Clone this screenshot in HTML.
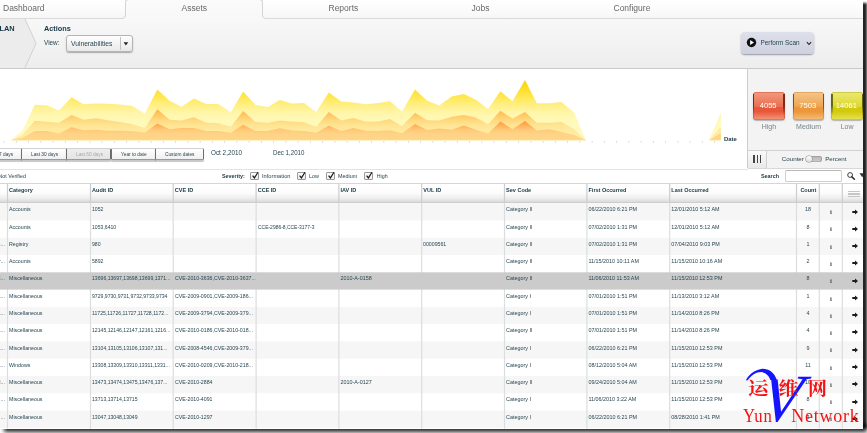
<!DOCTYPE html>
<html><head><meta charset="utf-8"><title>Assets - Vulnerabilities</title>
<style>
html,body{margin:0;padding:0;background:#fff;}
body{width:867px;height:433px;overflow:hidden;position:relative;font-family:"Liberation Sans","Noto Sans CJK SC",sans-serif;}
#card{will-change:transform;position:absolute;left:0;top:0;width:863px;height:428.5px;background:#fff;overflow:hidden;}
.t{position:absolute;white-space:nowrap;line-height:1.2;transform-origin:0 50%;}
.abs{position:absolute;}
.btn{position:absolute;box-sizing:border-box;border:1px solid #b4b4b4;border-radius:2px;background:linear-gradient(#fefefe,#e9e9e9);box-shadow:0 1px 0 rgba(0,0,0,.18);}
.cb{position:absolute;box-sizing:border-box;width:8.5px;height:8.5px;border:1px solid #9a9a9a;background:linear-gradient(#fff,#ececec);border-radius:1px;}
</style></head><body>
<div class="abs" style="left:858px;top:2.6px;width:8.6px;height:425px;background:rgba(0,0,0,.86);filter:blur(1px);"></div>
<div class="abs" style="left:3.5px;top:424px;width:863.2px;height:7.6px;background:rgba(0,0,0,.86);filter:blur(1.9px);"></div>
<div id="card">

<div class="abs" style="left:0;top:0;width:863px;height:18px;background:linear-gradient(#ffffff,#f7f7f7);border-bottom:1px solid #d9d9d9;"></div>
<div class="abs" style="left:0;top:19px;width:863px;height:48.7px;background:linear-gradient(#f8f8f8,#ededed);border-bottom:1px solid #c9c9c9;"></div>
<div class="abs" style="left:125px;top:-1.2px;width:138px;height:15.4px;box-sizing:border-box;background:linear-gradient(#fbfbfb,#f8f8f8);border:1px solid #d4d4d4;border-bottom:none;border-radius:3.5px 3.5px 0 0;"></div>
<svg class="abs" style="left:120px;top:13px" width="148" height="7" viewBox="120 13 148 7">
<path d="M125.5,14 C125.5,17 124.5,18.5 121.5,18.5 L121.5,19.6 L266.5,19.6 L266.5,18.5 C263.5,18.5 262.5,17 262.5,14 Z" fill="#f8f8f8"/>
<path d="M125.5,14 C125.5,17 124.5,18.5 121.5,18.5" fill="none" stroke="#d4d4d4" stroke-width="1"/>
<path d="M262.5,14 C262.5,17 263.5,18.5 266.5,18.5" fill="none" stroke="#d4d4d4" stroke-width="1"/>
</svg>
<span class="t" style="left:3px;top:3.35px;font-size:8.5px;color:#686868;">Dashboard</span>
<span class="t" style="left:181.5px;top:3.35px;font-size:8.5px;color:#686868;">Assets</span>
<span class="t" style="left:328.5px;top:3.35px;font-size:8.5px;color:#686868;">Reports</span>
<span class="t" style="left:471.5px;top:3.35px;font-size:8.5px;color:#686868;">Jobs</span>
<span class="t" style="left:613.5px;top:3.35px;font-size:8.5px;color:#686868;">Configure</span>
<svg class="abs" style="left:0;top:19px" width="40" height="49" viewBox="0 0 40 49">
<polygon points="0,0 25,0 36,24.3 25,48.7 0,48.7" fill="#ececec"/>
<polyline points="25,0 36,24.3 25,48.7" fill="none" stroke="#c9c9c9" stroke-width="0.8"/>
</svg>
<span class="t" style="left:-0.5px;top:24.66px;font-size:7.4px;color:#183643;font-weight:bold;">LAN</span>
<span class="t" style="left:44px;top:24.72px;font-size:7.3px;color:#183643;font-weight:bold;">Actions</span>
<span class="t" style="left:44px;top:39.36px;font-size:6.4px;color:#284652;">View:</span>
<div class="btn" style="left:65.7px;top:34.7px;width:67.3px;height:17.6px;border-radius:3px;box-shadow:0 1px 1.2px rgba(0,0,0,.3);"></div>
<div class="abs" style="left:120px;top:37px;width:1px;height:13px;background:#c4c4c4;"></div>
<span class="t" style="left:71px;top:39.58px;font-size:6.7px;color:#284652;">Vulnerabilities</span>
<svg class="abs" style="left:123.3px;top:41.7px" width="6" height="4" viewBox="0 0 6 4"><polygon points="0.6,0.3 5.2,0.3 2.9,3.4" fill="#222"/></svg>
<div class="abs" style="left:740.5px;top:31.5px;width:73.5px;height:22.5px;border-radius:4px;background:linear-gradient(#dddfeb,#cfd1df);box-shadow:0 1px 1.5px rgba(60,60,90,.5);"></div>
<svg class="abs" style="left:745.5px;top:37px" width="11" height="11" viewBox="0 0 11 11"><circle cx="5.5" cy="5.5" r="4.7" fill="#111"/><polygon points="4.1,3.1 8,5.5 4.1,7.9" fill="#fff"/></svg>
<span class="t" style="left:760.5px;top:38.56px;font-size:6.4px;color:#284652;">Perform Scan</span>
<svg class="abs" style="left:805.5px;top:40.5px" width="6" height="5" viewBox="0 0 6 5"><polyline points="0.9,1.2 3,3.5 5.1,1.2" fill="none" stroke="#222" stroke-width="1.1"/></svg>
<svg class="abs" style="left:0;top:68px" width="748" height="82" viewBox="0 68 748 82">
<defs>
<linearGradient id="g1" gradientUnits="userSpaceOnUse" x1="0" y1="78" x2="0" y2="140"><stop offset="0" stop-color="#f4d000"/><stop offset="0.2" stop-color="#ffe02e"/><stop offset="0.36" stop-color="#ffeb66"/><stop offset="0.45" stop-color="#fff08a"/><stop offset="0.55" stop-color="#fff5a6"/><stop offset="0.68" stop-color="#fff9b8"/><stop offset="1" stop-color="#fffac2"/></linearGradient>
<linearGradient id="g2" gradientUnits="userSpaceOnUse" x1="0" y1="108" x2="0" y2="140"><stop offset="0" stop-color="#ffae3e"/><stop offset="0.16" stop-color="#ffc25a"/><stop offset="0.36" stop-color="#ffd77a"/><stop offset="0.55" stop-color="#ffe595"/><stop offset="0.72" stop-color="#ffeb9e"/><stop offset="1" stop-color="#ffeeaa"/></linearGradient>
<linearGradient id="g3" gradientUnits="userSpaceOnUse" x1="0" y1="120" x2="0" y2="140"><stop offset="0" stop-color="#ff9236"/><stop offset="0.25" stop-color="#ffae56"/><stop offset="0.5" stop-color="#ffca7a"/><stop offset="0.7" stop-color="#ffd386"/><stop offset="1" stop-color="#ffd78a"/></linearGradient>
</defs>
<polygon points="11.3,140 22.6,130.3 34.8,104.8 46.8,105.2 59,110.5 71.6,97.2 83.5,104.2 96,103.6 108,103.7 120,104.5 132.5,106 144.8,113.8 157.3,89.6 169.6,100.7 181.4,106.7 193.9,98.6 206.2,104 218.3,104 230.8,112.3 243.1,91.4 255.6,105 267.7,106.9 279.8,100 292,103.4 304,102.9 316.2,112 328.8,92.5 341.3,101.5 353.4,102.4 366,104.2 378.2,102.9 390,101.2 402,111.5 415,89.6 427.2,100.8 439.2,105.5 451.7,96.5 463.9,93.9 475.8,99.8 488.1,109 500.4,91.3 512.5,101.2 525,79.9 536.8,103.2 549.2,103.2 561.4,102 574,112.4 585.8,140 585.8,140.3 11.3,140.3" fill="url(#g1)"/>
<polygon points="11.3,140 22.6,134.8 34.8,120.8 46.8,121.7 59,122.8 71.6,115 83.5,119.8 96,118.3 108,120.2 120,122 132.5,124.3 144.8,128 157.3,109.3 169.6,119.8 181.4,120.5 193.9,117.2 206.2,122.8 218.3,123.2 230.8,126.8 243.1,110.9 255.6,122 267.7,122.8 279.8,120.5 292,121.6 304,122.3 316.2,126.8 328.8,112 341.3,120.5 353.4,118.1 366,121.8 378.2,121.6 390,119 402,126 415,112.8 427.2,120.2 439.2,120.5 451.7,116.7 463.9,115 475.8,117.6 488.1,124.3 500.4,110.7 512.5,118.5 525,112 536.8,122.8 549.2,122.8 561.4,122 574,128.9 585.8,140 585.8,140.3 11.3,140.3" fill="url(#g2)"/>
<polygon points="11.3,140 22.6,137.8 34.8,131 46.8,131 59,133.6 71.6,127.3 83.5,130.3 96,129.8 108,130.7 120,130.7 132.5,131.3 144.8,132.8 157.3,123.5 169.6,129.2 181.4,128 193.9,128 206.2,131 218.3,131 230.8,132.8 243.1,124.8 255.6,131 267.7,131 279.8,128.3 292,130.6 304,131 316.2,132.7 328.8,125.7 341.3,131 353.4,128 366,130.8 378.2,131 390,130.2 402,133.2 415,124 427.2,130 439.2,128.5 451.7,129.7 463.9,125.4 475.8,129.7 488.1,133.5 500.4,121.4 512.5,129.2 525,121 536.8,130.6 549.2,129.2 561.4,132 574,135 585.8,140 585.8,140.3 11.3,140.3" fill="url(#g3)"/>
<polygon points="709,140.3 720.8,112.8 720.8,140.3" fill="url(#g1)"/>
<polygon points="709,140.3 720.8,127 720.8,140.3" fill="url(#g2)"/>
<polygon points="709,140.3 720.8,133 720.8,140.3" fill="url(#g3)"/>
<rect x="3.65" y="141" width="0.9" height="1.8" fill="#ccd6ea"/>
<rect x="15.90" y="141" width="0.9" height="1.8" fill="#ccd6ea"/>
<rect x="28.15" y="141" width="0.9" height="1.8" fill="#ccd6ea"/>
<rect x="40.40" y="141" width="0.9" height="1.8" fill="#ccd6ea"/>
<rect x="52.65" y="141" width="0.9" height="1.8" fill="#ccd6ea"/>
<rect x="64.90" y="141" width="0.9" height="1.8" fill="#ccd6ea"/>
<rect x="77.15" y="141" width="0.9" height="1.8" fill="#ccd6ea"/>
<rect x="89.40" y="141" width="0.9" height="1.8" fill="#ccd6ea"/>
<rect x="101.65" y="141" width="0.9" height="1.8" fill="#ccd6ea"/>
<rect x="113.90" y="141" width="0.9" height="1.8" fill="#ccd6ea"/>
<rect x="126.15" y="141" width="0.9" height="1.8" fill="#ccd6ea"/>
<rect x="138.40" y="141" width="0.9" height="1.8" fill="#ccd6ea"/>
<rect x="150.65" y="141" width="0.9" height="1.8" fill="#ccd6ea"/>
<rect x="162.90" y="141" width="0.9" height="1.8" fill="#ccd6ea"/>
<rect x="175.15" y="141" width="0.9" height="1.8" fill="#ccd6ea"/>
<rect x="187.40" y="141" width="0.9" height="1.8" fill="#ccd6ea"/>
<rect x="199.65" y="141" width="0.9" height="1.8" fill="#ccd6ea"/>
<rect x="211.90" y="141" width="0.9" height="1.8" fill="#ccd6ea"/>
<rect x="224.15" y="141" width="0.9" height="1.8" fill="#ccd6ea"/>
<rect x="236.40" y="141" width="0.9" height="1.8" fill="#ccd6ea"/>
<rect x="248.65" y="141" width="0.9" height="1.8" fill="#ccd6ea"/>
<rect x="260.90" y="141" width="0.9" height="1.8" fill="#ccd6ea"/>
<rect x="273.15" y="141" width="0.9" height="1.8" fill="#ccd6ea"/>
<rect x="285.40" y="141" width="0.9" height="1.8" fill="#ccd6ea"/>
<rect x="297.65" y="141" width="0.9" height="1.8" fill="#ccd6ea"/>
<rect x="309.90" y="141" width="0.9" height="1.8" fill="#ccd6ea"/>
<rect x="322.15" y="141" width="0.9" height="1.8" fill="#ccd6ea"/>
<rect x="334.40" y="141" width="0.9" height="1.8" fill="#ccd6ea"/>
<rect x="346.65" y="141" width="0.9" height="1.8" fill="#ccd6ea"/>
<rect x="358.90" y="141" width="0.9" height="1.8" fill="#ccd6ea"/>
<rect x="371.15" y="141" width="0.9" height="1.8" fill="#ccd6ea"/>
<rect x="383.40" y="141" width="0.9" height="1.8" fill="#ccd6ea"/>
<rect x="395.65" y="141" width="0.9" height="1.8" fill="#ccd6ea"/>
<rect x="407.90" y="141" width="0.9" height="1.8" fill="#ccd6ea"/>
<rect x="420.15" y="141" width="0.9" height="1.8" fill="#ccd6ea"/>
<rect x="432.40" y="141" width="0.9" height="1.8" fill="#ccd6ea"/>
<rect x="444.65" y="141" width="0.9" height="1.8" fill="#ccd6ea"/>
<rect x="456.90" y="141" width="0.9" height="1.8" fill="#ccd6ea"/>
<rect x="469.15" y="141" width="0.9" height="1.8" fill="#ccd6ea"/>
<rect x="481.40" y="141" width="0.9" height="1.8" fill="#ccd6ea"/>
<rect x="493.65" y="141" width="0.9" height="1.8" fill="#ccd6ea"/>
<rect x="505.90" y="141" width="0.9" height="1.8" fill="#ccd6ea"/>
<rect x="518.15" y="141" width="0.9" height="1.8" fill="#ccd6ea"/>
<rect x="530.40" y="141" width="0.9" height="1.8" fill="#ccd6ea"/>
<rect x="542.65" y="141" width="0.9" height="1.8" fill="#ccd6ea"/>
<rect x="554.90" y="141" width="0.9" height="1.8" fill="#ccd6ea"/>
<rect x="567.15" y="141" width="0.9" height="1.8" fill="#ccd6ea"/>
<rect x="579.40" y="141" width="0.9" height="1.8" fill="#ccd6ea"/>
<rect x="591.65" y="141" width="0.9" height="1.8" fill="#ccd6ea"/>
<rect x="603.90" y="141" width="0.9" height="1.8" fill="#ccd6ea"/>
<rect x="616.15" y="141" width="0.9" height="1.8" fill="#ccd6ea"/>
<rect x="628.40" y="141" width="0.9" height="1.8" fill="#ccd6ea"/>
<rect x="640.65" y="141" width="0.9" height="1.8" fill="#ccd6ea"/>
<rect x="652.90" y="141" width="0.9" height="1.8" fill="#ccd6ea"/>
<rect x="665.15" y="141" width="0.9" height="1.8" fill="#ccd6ea"/>
<rect x="677.40" y="141" width="0.9" height="1.8" fill="#ccd6ea"/>
<rect x="689.65" y="141" width="0.9" height="1.8" fill="#ccd6ea"/>
<rect x="701.90" y="141" width="0.9" height="1.8" fill="#ccd6ea"/>
<rect x="714.15" y="141" width="0.9" height="1.8" fill="#ccd6ea"/>
</svg>
<span class="t" style="left:724px;top:135.66px;font-size:5.9px;color:#183643;font-weight:bold;">Date</span>
<div class="abs" style="left:-12.5px;top:147.7px;width:34.3px;height:12px;box-sizing:border-box;background:linear-gradient(#ffffff,#f0f0f0);border-top:1px solid #d2d2d2;border-bottom:1px solid #9a9a9a;border-left:1px solid #6f6f6f;border-right:1px solid #6f6f6f;border-radius:1.5px;box-shadow:0 1.2px 1px rgba(0,0,0,.22);"></div>
<div class="abs" style="left:20.8px;top:147.7px;width:45.900000000000006px;height:12px;box-sizing:border-box;background:linear-gradient(#ffffff,#f0f0f0);border-top:1px solid #d2d2d2;border-bottom:1px solid #9a9a9a;border-left:1px solid #6f6f6f;border-right:1px solid #6f6f6f;border-radius:1.5px;box-shadow:0 1.2px 1px rgba(0,0,0,.22);"></div>
<div class="abs" style="left:65.7px;top:147.7px;width:45.8px;height:12px;box-sizing:border-box;background:linear-gradient(#eeeeee,#e4e4e4);border-top:1px solid #d2d2d2;border-bottom:1px solid #9a9a9a;border-left:1px solid #6f6f6f;border-right:1px solid #6f6f6f;border-radius:1.5px;box-shadow:0 1.2px 1px rgba(0,0,0,.22);"></div>
<div class="abs" style="left:110.5px;top:147.7px;width:45.599999999999994px;height:12px;box-sizing:border-box;background:linear-gradient(#ffffff,#f0f0f0);border-top:1px solid #d2d2d2;border-bottom:1px solid #9a9a9a;border-left:1px solid #6f6f6f;border-right:1px solid #6f6f6f;border-radius:1.5px;box-shadow:0 1.2px 1px rgba(0,0,0,.22);"></div>
<div class="abs" style="left:155.1px;top:147.7px;width:48.70000000000002px;height:12px;box-sizing:border-box;background:linear-gradient(#ffffff,#f0f0f0);border-top:1px solid #d2d2d2;border-bottom:1px solid #9a9a9a;border-left:1px solid #6f6f6f;border-right:1px solid #6f6f6f;border-radius:1.5px;box-shadow:0 1.2px 1px rgba(0,0,0,.22);"></div>
<span class="t" style="left:-1.3px;top:150.62px;font-size:5.3px;color:#284652;transform:scaleX(0.9);">7 days</span>
<span class="t" style="left:31px;top:150.62px;font-size:5.3px;color:#284652;transform:scaleX(0.9);">Last 30 days</span>
<span class="t" style="left:76px;top:150.62px;font-size:5.3px;color:#a3a8ab;transform:scaleX(0.9);">Last 60 days</span>
<span class="t" style="left:121px;top:150.62px;font-size:5.3px;color:#284652;transform:scaleX(0.9);">Year to date</span>
<span class="t" style="left:165.3px;top:150.62px;font-size:5.3px;color:#284652;transform:scaleX(0.9);">Custom dates</span>
<span class="t" style="left:210.5px;top:148.74px;font-size:6.6px;color:#284652;transform:scaleX(0.96);">Oct 2,2010</span>
<span class="t" style="left:273.4px;top:148.74px;font-size:6.6px;color:#284652;transform:scaleX(0.93);">Dec 1,2010</span>
<div class="abs" style="left:0;top:168.5px;width:748px;height:1px;background:#e1e4e4;"></div>
<div class="abs" style="left:746.7px;top:68.7px;width:117px;height:99.8px;background:#f3f3f3;border-left:1px solid #cdcdcd;box-sizing:border-box;"></div>
<div class="abs" style="left:748px;top:149.5px;width:115px;height:1px;background:#d2d2d2;"></div>
<div class="abs" style="left:748px;top:168px;width:115px;height:1px;background:#d8d8d8;"></div>
<div class="abs" style="left:753.2px;top:91.5px;width:31.5px;height:28px;border-radius:3.5px;background:linear-gradient(#f19a80 0%,#ec6e50 52%,#e9573a 53%,#e9573a 70%,#f39c7c 100%);box-shadow:inset 0 0 0 0.6px #d2553a,0 1px 1.2px rgba(0,0,0,.28);"></div>
<div class="abs" style="left:753.2px;top:94px;width:1.3px;height:21px;background:linear-gradient(#6e1d08,#6e1d08 55%,rgba(0,0,0,0));opacity:.85;"></div>
<div class="abs" style="left:783.4000000000001px;top:94px;width:1.3px;height:21px;background:linear-gradient(#6e1d08,#6e1d08 55%,rgba(0,0,0,0));opacity:.85;"></div>
<span class="t" style="left:752.4000000000001px;width:31.5px;text-align:center;top:100.94px;font-size:7.6px;color:#fff;">4055</span>
<span class="t" style="left:742.7px;width:52.5px;text-align:center;top:122.70px;font-size:7px;color:#76858a;">High</span>
<div class="abs" style="left:792.8px;top:91.5px;width:31.5px;height:28px;border-radius:3.5px;background:linear-gradient(#f5c68a 0%,#eea552 52%,#ec973a 53%,#ec973a 70%,#f6bf7e 100%);box-shadow:inset 0 0 0 0.6px #cf8a3c,0 1px 1.2px rgba(0,0,0,.28);"></div>
<div class="abs" style="left:792.8px;top:94px;width:1.3px;height:21px;background:linear-gradient(#7a4208,#7a4208 55%,rgba(0,0,0,0));opacity:.85;"></div>
<div class="abs" style="left:823.0px;top:94px;width:1.3px;height:21px;background:linear-gradient(#7a4208,#7a4208 55%,rgba(0,0,0,0));opacity:.85;"></div>
<span class="t" style="left:792.0px;width:31.5px;text-align:center;top:100.94px;font-size:7.6px;color:#fff;">7503</span>
<span class="t" style="left:782.3px;width:52.5px;text-align:center;top:122.70px;font-size:7px;color:#76858a;">Medium</span>
<div class="abs" style="left:831.4px;top:91.5px;width:31.5px;height:28px;border-radius:3.5px;background:linear-gradient(#ebe874 0%,#dcd830 52%,#d2ca0c 53%,#d2ca0c 70%,#e7e35a 100%);box-shadow:inset 0 0 0 0.6px #b4ae18,0 1px 1.2px rgba(0,0,0,.28);"></div>
<div class="abs" style="left:831.4px;top:94px;width:1.3px;height:21px;background:linear-gradient(#55560a,#55560a 55%,rgba(0,0,0,0));opacity:.85;"></div>
<div class="abs" style="left:861.6px;top:94px;width:1.3px;height:21px;background:linear-gradient(#55560a,#55560a 55%,rgba(0,0,0,0));opacity:.85;"></div>
<span class="t" style="left:830.6px;width:31.5px;text-align:center;top:100.94px;font-size:7.6px;color:#fff;">14061</span>
<span class="t" style="left:820.9px;width:52.5px;text-align:center;top:122.70px;font-size:7px;color:#76858a;">Low</span>
<div class="abs" style="left:748px;top:150.5px;width:18px;height:17.5px;background:linear-gradient(#f9f9f9,#e9e9e9);border-right:1px solid #cfcfcf;"></div>
<div class="abs" style="left:753.3px;top:155.2px;width:1.4px;height:8.3px;background:#444;"></div>
<div class="abs" style="left:756.5px;top:155.2px;width:1.4px;height:8.3px;background:#444;"></div>
<div class="abs" style="left:759.6px;top:155.2px;width:1.4px;height:8.3px;background:#444;"></div>
<span class="t" style="left:781.7px;top:155.25px;font-size:6.25px;color:#284652;">Counter</span>
<span class="t" style="left:825.2px;top:155.28px;font-size:6.2px;color:#284652;">Percent</span>
<div class="abs" style="left:806px;top:156px;width:15.5px;height:6px;border-radius:3px;background:linear-gradient(#b4b4b4,#d0d0d0);box-shadow:inset 0 0 0 0.6px #8f8f8f;"></div>
<div class="abs" style="left:806.4px;top:156.3px;width:5.6px;height:5.4px;border-radius:3px;background:linear-gradient(#fff,#dedede);box-shadow:0 0 0 0.6px #8a8a8a;"></div>
<span class="t" style="left:-1.5px;top:172.82px;font-size:5.3px;color:#284652;">Not Verified</span>
<span class="t" style="left:222px;top:172.56px;font-size:5.4px;color:#183643;font-weight:bold;">Severity:</span>
<div class="cb" style="left:250px;top:171.7px;"></div>
<svg class="abs" style="left:250.8px;top:171px" width="9" height="9" viewBox="0 0 9 9"><polyline points="1.6,4.6 3.4,6.9 7,1.2" fill="none" stroke="#151515" stroke-width="1.15"/></svg>
<span class="t" style="left:262px;top:172.58px;font-size:5.7px;color:#284652;">Information</span>
<div class="cb" style="left:297px;top:171.7px;"></div>
<svg class="abs" style="left:297.8px;top:171px" width="9" height="9" viewBox="0 0 9 9"><polyline points="1.6,4.6 3.4,6.9 7,1.2" fill="none" stroke="#151515" stroke-width="1.15"/></svg>
<span class="t" style="left:309px;top:172.82px;font-size:5.3px;color:#284652;">Low</span>
<div class="cb" style="left:326px;top:171.7px;"></div>
<svg class="abs" style="left:326.8px;top:171px" width="9" height="9" viewBox="0 0 9 9"><polyline points="1.6,4.6 3.4,6.9 7,1.2" fill="none" stroke="#151515" stroke-width="1.15"/></svg>
<span class="t" style="left:338px;top:172.76px;font-size:5.4px;color:#284652;">Medium</span>
<div class="cb" style="left:364px;top:171.7px;"></div>
<svg class="abs" style="left:364.8px;top:171px" width="9" height="9" viewBox="0 0 9 9"><polyline points="1.6,4.6 3.4,6.9 7,1.2" fill="none" stroke="#151515" stroke-width="1.15"/></svg>
<span class="t" style="left:376.8px;top:172.82px;font-size:5.3px;color:#284652;">High</span>
<span class="t" style="left:761px;top:172.76px;font-size:5.4px;color:#183643;font-weight:bold;">Search</span>
<div class="abs" style="left:785px;top:170px;width:57px;height:12px;box-sizing:border-box;border:1px solid #d0d0d0;border-top:1.5px solid #b9b9b9;border-radius:1.5px;background:#fff;"></div>
<svg class="abs" style="left:846.3px;top:171.3px" width="12" height="11" viewBox="0 0 12 11"><circle cx="4.1" cy="4" r="2.4" fill="none" stroke="#2a2a2a" stroke-width="0.9"/><line x1="5.9" y1="5.9" x2="8.4" y2="8.2" stroke="#2a2a2a" stroke-width="1.5" stroke-linecap="round"/></svg>
<svg class="abs" style="left:858.5px;top:173px" width="6" height="5" viewBox="0 0 6 5"><polygon points="0.5,0.3 6,0.3 3.2,4.3" fill="#333"/></svg>
<div class="abs" style="left:0;top:183px;width:863px;height:20px;background:linear-gradient(#ffffff,#fcfcfc 50%,#ededed 80%,#dadada);border-top:1px solid #d6d6d6;border-bottom:1px solid #cdcdcd;box-sizing:border-box;"></div>
<svg class="abs" style="left:0;top:203px" width="863" height="226" viewBox="0 203 863 226">
<rect x="0" y="203.20" width="863" height="17.28" fill="#f6f6f6"/>
<rect x="0" y="237.76" width="863" height="17.28" fill="#f6f6f6"/>
<rect x="0" y="306.88" width="863" height="17.28" fill="#f6f6f6"/>
<rect x="0" y="341.44" width="863" height="17.28" fill="#f6f6f6"/>
<rect x="0" y="376.00" width="863" height="17.28" fill="#f6f6f6"/>
<rect x="0" y="410.56" width="863" height="17.28" fill="#f6f6f6"/>
<rect x="6.90" y="203" width="1.2" height="225.6" fill="#dcdddd"/>
<rect x="89.90" y="203" width="1.2" height="225.6" fill="#dcdddd"/>
<rect x="172.60" y="203" width="1.2" height="225.6" fill="#dcdddd"/>
<rect x="255.50" y="203" width="1.2" height="225.6" fill="#dcdddd"/>
<rect x="338.30" y="203" width="1.2" height="225.6" fill="#dcdddd"/>
<rect x="421.10" y="203" width="1.2" height="225.6" fill="#dcdddd"/>
<rect x="503.90" y="203" width="1.2" height="225.6" fill="#dcdddd"/>
<rect x="586.30" y="203" width="1.2" height="225.6" fill="#dcdddd"/>
<rect x="669.10" y="203" width="1.2" height="225.6" fill="#dcdddd"/>
<rect x="795.90" y="203" width="1.2" height="225.6" fill="#dcdddd"/>
<rect x="818.70" y="203" width="1.2" height="225.6" fill="#dcdddd"/>
<rect x="841.70" y="203" width="1.2" height="225.6" fill="#dcdddd"/>
<rect x="0" y="272.32" width="863" height="17.28" fill="#cbcbcb"/>
</svg>
<svg class="abs" style="left:0;top:183px" width="863" height="20" viewBox="0 183 863 20">
<rect x="6.90" y="183.8" width="1.2" height="19" fill="#cbcdce"/>
<rect x="89.90" y="183.8" width="1.2" height="19" fill="#cbcdce"/>
<rect x="172.60" y="183.8" width="1.2" height="19" fill="#cbcdce"/>
<rect x="255.50" y="183.8" width="1.2" height="19" fill="#cbcdce"/>
<rect x="338.30" y="183.8" width="1.2" height="19" fill="#cbcdce"/>
<rect x="421.10" y="183.8" width="1.2" height="19" fill="#cbcdce"/>
<rect x="503.90" y="183.8" width="1.2" height="19" fill="#cbcdce"/>
<rect x="586.30" y="183.8" width="1.2" height="19" fill="#cbcdce"/>
<rect x="669.10" y="183.8" width="1.2" height="19" fill="#cbcdce"/>
<rect x="795.90" y="183.8" width="1.2" height="19" fill="#cbcdce"/>
<rect x="818.70" y="183.8" width="1.2" height="19" fill="#cbcdce"/>
<rect x="841.70" y="183.8" width="1.2" height="19" fill="#cbcdce"/>
</svg>
<span class="t" style="left:9.1px;top:186.70px;font-size:5.5px;color:#183643;font-weight:bold;">Category</span>
<span class="t" style="left:92.1px;top:186.70px;font-size:5.5px;color:#183643;font-weight:bold;">Audit ID</span>
<span class="t" style="left:174.79999999999998px;top:186.70px;font-size:5.5px;color:#183643;font-weight:bold;">CVE ID</span>
<span class="t" style="left:257.70000000000005px;top:186.70px;font-size:5.5px;color:#183643;font-weight:bold;">CCE ID</span>
<span class="t" style="left:340.5px;top:186.70px;font-size:5.5px;color:#183643;font-weight:bold;">IAV ID</span>
<span class="t" style="left:423.3px;top:186.70px;font-size:5.5px;color:#183643;font-weight:bold;">VUL ID</span>
<span class="t" style="left:506.1px;top:186.70px;font-size:5.5px;color:#183643;font-weight:bold;">Sev Code</span>
<span class="t" style="left:588.5px;top:186.70px;font-size:5.5px;color:#183643;font-weight:bold;">First Occurred</span>
<span class="t" style="left:671.3000000000001px;top:186.70px;font-size:5.5px;color:#183643;font-weight:bold;">Last Occurred</span>
<span class="t" style="left:800.4px;top:186.70px;font-size:5.5px;color:#183643;font-weight:bold;">Count</span>
<div class="abs" style="left:848px;top:190.5px;width:12px;height:1.6px;background:#c6c6c6;"></div>
<div class="abs" style="left:848px;top:193.1px;width:12px;height:1.6px;background:#c6c6c6;"></div>
<div class="abs" style="left:848px;top:195.7px;width:12px;height:1.6px;background:#c6c6c6;"></div>
<span class="t" style="left:9.1px;top:206.36px;font-size:5.4px;color:#284652;transform:scaleX(0.98);">Accounts</span>
<span class="t" style="left:92.1px;top:206.36px;font-size:5.4px;color:#284652;transform:scaleX(0.95);">1052</span>
<span class="t" style="left:506.1px;top:206.36px;font-size:5.4px;color:#284652;">Category II</span>
<span class="t" style="left:588.5px;top:206.36px;font-size:5.4px;color:#284652;">06/22/2010 6:21 PM</span>
<span class="t" style="left:671.3000000000001px;top:206.36px;font-size:5.4px;color:#284652;">12/01/2010 5:12 AM</span>
<span class="t" style="left:797.5px;width:21px;text-align:center;top:206.36px;font-size:5.4px;color:#284652;">18</span>
<span class="t" style="left:825.9px;width:10px;text-align:center;top:208.12px;font-size:6.8px;font-weight:bold;color:#4a4a4a;font-family:'Liberation Serif',serif;">i</span>
<svg class="abs" style="left:851.5px;top:208.50px" width="7" height="6" viewBox="0 0 7 6"><polygon points="0.3,2.1 3,2.1 3,0.5 6,3 3,5.5 3,3.9 0.3,3.9" fill="#1c1c1c"/></svg>
<span class="t" style="left:9.1px;top:223.64px;font-size:5.4px;color:#284652;transform:scaleX(0.98);">Accounts</span>
<span class="t" style="left:92.1px;top:223.64px;font-size:5.4px;color:#284652;transform:scaleX(0.95);">1053,6410</span>
<span class="t" style="left:257.70000000000005px;top:223.64px;font-size:5.4px;color:#284652;transform:scaleX(0.92);">CCE-2986-8,CCE-3177-3</span>
<span class="t" style="left:506.1px;top:223.64px;font-size:5.4px;color:#284652;">Category II</span>
<span class="t" style="left:588.5px;top:223.64px;font-size:5.4px;color:#284652;">07/02/2010 1:31 PM</span>
<span class="t" style="left:671.3000000000001px;top:223.64px;font-size:5.4px;color:#284652;">12/01/2010 5:12 AM</span>
<span class="t" style="left:797.5px;width:21px;text-align:center;top:223.64px;font-size:5.4px;color:#284652;">8</span>
<span class="t" style="left:825.9px;width:10px;text-align:center;top:225.40px;font-size:6.8px;font-weight:bold;color:#4a4a4a;font-family:'Liberation Serif',serif;">i</span>
<svg class="abs" style="left:851.5px;top:225.78px" width="7" height="6" viewBox="0 0 7 6"><polygon points="0.3,2.1 3,2.1 3,0.5 6,3 3,5.5 3,3.9 0.3,3.9" fill="#1c1c1c"/></svg>
<span class="t" style="left:-22px;width:27px;text-align:right;top:240.92px;font-size:5.4px;color:#284652;">s...</span>
<span class="t" style="left:9.1px;top:240.92px;font-size:5.4px;color:#284652;transform:scaleX(0.98);">Registry</span>
<span class="t" style="left:92.1px;top:240.92px;font-size:5.4px;color:#284652;transform:scaleX(0.95);">980</span>
<span class="t" style="left:423.3px;top:240.92px;font-size:5.4px;color:#284652;transform:scaleX(0.97);">00009561</span>
<span class="t" style="left:506.1px;top:240.92px;font-size:5.4px;color:#284652;">Category II</span>
<span class="t" style="left:588.5px;top:240.92px;font-size:5.4px;color:#284652;">07/02/2010 1:31 PM</span>
<span class="t" style="left:671.3000000000001px;top:240.92px;font-size:5.4px;color:#284652;">07/04/2010 9:03 PM</span>
<span class="t" style="left:797.5px;width:21px;text-align:center;top:240.92px;font-size:5.4px;color:#284652;">1</span>
<span class="t" style="left:825.9px;width:10px;text-align:center;top:242.68px;font-size:6.8px;font-weight:bold;color:#4a4a4a;font-family:'Liberation Serif',serif;">i</span>
<svg class="abs" style="left:851.5px;top:243.06px" width="7" height="6" viewBox="0 0 7 6"><polygon points="0.3,2.1 3,2.1 3,0.5 6,3 3,5.5 3,3.9 0.3,3.9" fill="#1c1c1c"/></svg>
<span class="t" style="left:-22px;width:27px;text-align:right;top:258.20px;font-size:5.4px;color:#284652;">r...</span>
<span class="t" style="left:9.1px;top:258.20px;font-size:5.4px;color:#284652;transform:scaleX(0.98);">Accounts</span>
<span class="t" style="left:92.1px;top:258.20px;font-size:5.4px;color:#284652;transform:scaleX(0.95);">5892</span>
<span class="t" style="left:506.1px;top:258.20px;font-size:5.4px;color:#284652;">Category II</span>
<span class="t" style="left:588.5px;top:258.20px;font-size:5.4px;color:#284652;">11/15/2010 10:11 AM</span>
<span class="t" style="left:671.3000000000001px;top:258.20px;font-size:5.4px;color:#284652;">11/15/2010 10:16 AM</span>
<span class="t" style="left:797.5px;width:21px;text-align:center;top:258.20px;font-size:5.4px;color:#284652;">2</span>
<span class="t" style="left:825.9px;width:10px;text-align:center;top:259.96px;font-size:6.8px;font-weight:bold;color:#4a4a4a;font-family:'Liberation Serif',serif;">i</span>
<svg class="abs" style="left:851.5px;top:260.34px" width="7" height="6" viewBox="0 0 7 6"><polygon points="0.3,2.1 3,2.1 3,0.5 6,3 3,5.5 3,3.9 0.3,3.9" fill="#1c1c1c"/></svg>
<span class="t" style="left:-22px;width:27px;text-align:right;top:275.48px;font-size:5.4px;color:#284652;">8...</span>
<span class="t" style="left:9.1px;top:275.48px;font-size:5.4px;color:#284652;transform:scaleX(0.98);">Miscellaneous</span>
<span class="t" style="left:92.1px;top:275.48px;font-size:5.4px;color:#284652;transform:scaleX(0.95);">13696,13697,13698,13699,1371...</span>
<span class="t" style="left:174.79999999999998px;top:275.48px;font-size:5.4px;color:#284652;transform:scaleX(0.97);">CVE-2010-3636,CVE-2010-3637...</span>
<span class="t" style="left:340.5px;top:275.48px;font-size:5.4px;color:#284652;">2010-A-0158</span>
<span class="t" style="left:506.1px;top:275.48px;font-size:5.4px;color:#284652;">Category II</span>
<span class="t" style="left:588.5px;top:275.48px;font-size:5.4px;color:#284652;">11/06/2010 11:53 AM</span>
<span class="t" style="left:671.3000000000001px;top:275.48px;font-size:5.4px;color:#284652;">11/15/2010 12:53 PM</span>
<span class="t" style="left:797.5px;width:21px;text-align:center;top:275.48px;font-size:5.4px;color:#284652;">8</span>
<span class="t" style="left:825.9px;width:10px;text-align:center;top:277.24px;font-size:6.8px;font-weight:bold;color:#4a4a4a;font-family:'Liberation Serif',serif;">i</span>
<svg class="abs" style="left:851.5px;top:277.62px" width="7" height="6" viewBox="0 0 7 6"><polygon points="0.3,2.1 3,2.1 3,0.5 6,3 3,5.5 3,3.9 0.3,3.9" fill="#1c1c1c"/></svg>
<span class="t" style="left:-22px;width:27px;text-align:right;top:292.76px;font-size:5.4px;color:#284652;">L...</span>
<span class="t" style="left:9.1px;top:292.76px;font-size:5.4px;color:#284652;transform:scaleX(0.98);">Miscellaneous</span>
<span class="t" style="left:92.1px;top:292.76px;font-size:5.4px;color:#284652;transform:scaleX(0.95);">9729,9730,9731,9732,9733,9734</span>
<span class="t" style="left:174.79999999999998px;top:292.76px;font-size:5.4px;color:#284652;transform:scaleX(0.97);">CVE-2009-0901,CVE-2009-186...</span>
<span class="t" style="left:506.1px;top:292.76px;font-size:5.4px;color:#284652;">Category I</span>
<span class="t" style="left:588.5px;top:292.76px;font-size:5.4px;color:#284652;">07/01/2010 1:51 PM</span>
<span class="t" style="left:671.3000000000001px;top:292.76px;font-size:5.4px;color:#284652;">11/13/2010 3:12 AM</span>
<span class="t" style="left:797.5px;width:21px;text-align:center;top:292.76px;font-size:5.4px;color:#284652;">1</span>
<span class="t" style="left:825.9px;width:10px;text-align:center;top:294.52px;font-size:6.8px;font-weight:bold;color:#4a4a4a;font-family:'Liberation Serif',serif;">i</span>
<svg class="abs" style="left:851.5px;top:294.90px" width="7" height="6" viewBox="0 0 7 6"><polygon points="0.3,2.1 3,2.1 3,0.5 6,3 3,5.5 3,3.9 0.3,3.9" fill="#1c1c1c"/></svg>
<span class="t" style="left:-22px;width:27px;text-align:right;top:310.04px;font-size:5.4px;color:#284652;">L...</span>
<span class="t" style="left:9.1px;top:310.04px;font-size:5.4px;color:#284652;transform:scaleX(0.98);">Miscellaneous</span>
<span class="t" style="left:92.1px;top:310.04px;font-size:5.4px;color:#284652;transform:scaleX(0.95);">11725,11726,11727,11728,1172...</span>
<span class="t" style="left:174.79999999999998px;top:310.04px;font-size:5.4px;color:#284652;transform:scaleX(0.97);">CVE-2009-3794,CVE-2009-379...</span>
<span class="t" style="left:506.1px;top:310.04px;font-size:5.4px;color:#284652;">Category I</span>
<span class="t" style="left:588.5px;top:310.04px;font-size:5.4px;color:#284652;">07/01/2010 1:51 PM</span>
<span class="t" style="left:671.3000000000001px;top:310.04px;font-size:5.4px;color:#284652;">11/14/2010 8:26 PM</span>
<span class="t" style="left:797.5px;width:21px;text-align:center;top:310.04px;font-size:5.4px;color:#284652;">4</span>
<span class="t" style="left:825.9px;width:10px;text-align:center;top:311.80px;font-size:6.8px;font-weight:bold;color:#4a4a4a;font-family:'Liberation Serif',serif;">i</span>
<svg class="abs" style="left:851.5px;top:312.18px" width="7" height="6" viewBox="0 0 7 6"><polygon points="0.3,2.1 3,2.1 3,0.5 6,3 3,5.5 3,3.9 0.3,3.9" fill="#1c1c1c"/></svg>
<span class="t" style="left:-22px;width:27px;text-align:right;top:327.32px;font-size:5.4px;color:#284652;">L...</span>
<span class="t" style="left:9.1px;top:327.32px;font-size:5.4px;color:#284652;transform:scaleX(0.98);">Miscellaneous</span>
<span class="t" style="left:92.1px;top:327.32px;font-size:5.4px;color:#284652;transform:scaleX(0.95);">12145,12146,12147,12161,1216...</span>
<span class="t" style="left:174.79999999999998px;top:327.32px;font-size:5.4px;color:#284652;transform:scaleX(0.97);">CVE-2010-0186,CVE-2010-018...</span>
<span class="t" style="left:506.1px;top:327.32px;font-size:5.4px;color:#284652;">Category II</span>
<span class="t" style="left:588.5px;top:327.32px;font-size:5.4px;color:#284652;">07/01/2010 1:51 PM</span>
<span class="t" style="left:671.3000000000001px;top:327.32px;font-size:5.4px;color:#284652;">11/14/2010 8:26 PM</span>
<span class="t" style="left:797.5px;width:21px;text-align:center;top:327.32px;font-size:5.4px;color:#284652;">4</span>
<span class="t" style="left:825.9px;width:10px;text-align:center;top:329.08px;font-size:6.8px;font-weight:bold;color:#4a4a4a;font-family:'Liberation Serif',serif;">i</span>
<svg class="abs" style="left:851.5px;top:329.46px" width="7" height="6" viewBox="0 0 7 6"><polygon points="0.3,2.1 3,2.1 3,0.5 6,3 3,5.5 3,3.9 0.3,3.9" fill="#1c1c1c"/></svg>
<span class="t" style="left:-22px;width:27px;text-align:right;top:344.60px;font-size:5.4px;color:#284652;">L...</span>
<span class="t" style="left:9.1px;top:344.60px;font-size:5.4px;color:#284652;transform:scaleX(0.98);">Miscellaneous</span>
<span class="t" style="left:92.1px;top:344.60px;font-size:5.4px;color:#284652;transform:scaleX(0.95);">13104,13105,13106,13107,131...</span>
<span class="t" style="left:174.79999999999998px;top:344.60px;font-size:5.4px;color:#284652;transform:scaleX(0.97);">CVE-2008-4546,CVE-2009-379...</span>
<span class="t" style="left:506.1px;top:344.60px;font-size:5.4px;color:#284652;">Category I</span>
<span class="t" style="left:588.5px;top:344.60px;font-size:5.4px;color:#284652;">06/22/2010 6:21 PM</span>
<span class="t" style="left:671.3000000000001px;top:344.60px;font-size:5.4px;color:#284652;">11/15/2010 12:53 PM</span>
<span class="t" style="left:797.5px;width:21px;text-align:center;top:344.60px;font-size:5.4px;color:#284652;">9</span>
<span class="t" style="left:825.9px;width:10px;text-align:center;top:346.36px;font-size:6.8px;font-weight:bold;color:#4a4a4a;font-family:'Liberation Serif',serif;">i</span>
<svg class="abs" style="left:851.5px;top:346.74px" width="7" height="6" viewBox="0 0 7 6"><polygon points="0.3,2.1 3,2.1 3,0.5 6,3 3,5.5 3,3.9 0.3,3.9" fill="#1c1c1c"/></svg>
<span class="t" style="left:-22px;width:27px;text-align:right;top:361.88px;font-size:5.4px;color:#284652;">L...</span>
<span class="t" style="left:9.1px;top:361.88px;font-size:5.4px;color:#284652;transform:scaleX(0.98);">Windows</span>
<span class="t" style="left:92.1px;top:361.88px;font-size:5.4px;color:#284652;transform:scaleX(0.95);">13308,13309,13310,13311,1331...</span>
<span class="t" style="left:174.79999999999998px;top:361.88px;font-size:5.4px;color:#284652;transform:scaleX(0.97);">CVE-2010-0209,CVE-2010-218...</span>
<span class="t" style="left:506.1px;top:361.88px;font-size:5.4px;color:#284652;">Category I</span>
<span class="t" style="left:588.5px;top:361.88px;font-size:5.4px;color:#284652;">08/12/2010 5:04 AM</span>
<span class="t" style="left:671.3000000000001px;top:361.88px;font-size:5.4px;color:#284652;">11/15/2010 12:53 PM</span>
<span class="t" style="left:797.5px;width:21px;text-align:center;top:361.88px;font-size:5.4px;color:#284652;">11</span>
<span class="t" style="left:825.9px;width:10px;text-align:center;top:363.64px;font-size:6.8px;font-weight:bold;color:#4a4a4a;font-family:'Liberation Serif',serif;">i</span>
<svg class="abs" style="left:851.5px;top:364.02px" width="7" height="6" viewBox="0 0 7 6"><polygon points="0.3,2.1 3,2.1 3,0.5 6,3 3,5.5 3,3.9 0.3,3.9" fill="#1c1c1c"/></svg>
<span class="t" style="left:-22px;width:27px;text-align:right;top:379.16px;font-size:5.4px;color:#284652;">d...</span>
<span class="t" style="left:9.1px;top:379.16px;font-size:5.4px;color:#284652;transform:scaleX(0.98);">Miscellaneous</span>
<span class="t" style="left:92.1px;top:379.16px;font-size:5.4px;color:#284652;transform:scaleX(0.95);">13473,13474,13475,13476,137...</span>
<span class="t" style="left:174.79999999999998px;top:379.16px;font-size:5.4px;color:#284652;transform:scaleX(0.97);">CVE-2010-2884</span>
<span class="t" style="left:340.5px;top:379.16px;font-size:5.4px;color:#284652;">2010-A-0127</span>
<span class="t" style="left:506.1px;top:379.16px;font-size:5.4px;color:#284652;">Category II</span>
<span class="t" style="left:588.5px;top:379.16px;font-size:5.4px;color:#284652;">09/24/2010 5:04 AM</span>
<span class="t" style="left:671.3000000000001px;top:379.16px;font-size:5.4px;color:#284652;">11/15/2010 12:53 PM</span>
<span class="t" style="left:797.5px;width:21px;text-align:center;top:379.16px;font-size:5.4px;color:#284652;">10</span>
<span class="t" style="left:825.9px;width:10px;text-align:center;top:380.92px;font-size:6.8px;font-weight:bold;color:#4a4a4a;font-family:'Liberation Serif',serif;">i</span>
<svg class="abs" style="left:851.5px;top:381.30px" width="7" height="6" viewBox="0 0 7 6"><polygon points="0.3,2.1 3,2.1 3,0.5 6,3 3,5.5 3,3.9 0.3,3.9" fill="#1c1c1c"/></svg>
<span class="t" style="left:-22px;width:27px;text-align:right;top:396.44px;font-size:5.4px;color:#284652;">o ...</span>
<span class="t" style="left:9.1px;top:396.44px;font-size:5.4px;color:#284652;transform:scaleX(0.98);">Miscellaneous</span>
<span class="t" style="left:92.1px;top:396.44px;font-size:5.4px;color:#284652;transform:scaleX(0.95);">13713,13714,13715</span>
<span class="t" style="left:174.79999999999998px;top:396.44px;font-size:5.4px;color:#284652;transform:scaleX(0.97);">CVE-2010-4091</span>
<span class="t" style="left:506.1px;top:396.44px;font-size:5.4px;color:#284652;">Category I</span>
<span class="t" style="left:588.5px;top:396.44px;font-size:5.4px;color:#284652;">11/06/2010 3:22 AM</span>
<span class="t" style="left:671.3000000000001px;top:396.44px;font-size:5.4px;color:#284652;">11/15/2010 12:53 PM</span>
<span class="t" style="left:797.5px;width:21px;text-align:center;top:396.44px;font-size:5.4px;color:#284652;">8</span>
<span class="t" style="left:825.9px;width:10px;text-align:center;top:398.20px;font-size:6.8px;font-weight:bold;color:#4a4a4a;font-family:'Liberation Serif',serif;">i</span>
<svg class="abs" style="left:851.5px;top:398.58px" width="7" height="6" viewBox="0 0 7 6"><polygon points="0.3,2.1 3,2.1 3,0.5 6,3 3,5.5 3,3.9 0.3,3.9" fill="#1c1c1c"/></svg>
<span class="t" style="left:-22px;width:27px;text-align:right;top:413.72px;font-size:5.4px;color:#284652;">...</span>
<span class="t" style="left:9.1px;top:413.72px;font-size:5.4px;color:#284652;transform:scaleX(0.98);">Miscellaneous</span>
<span class="t" style="left:92.1px;top:413.72px;font-size:5.4px;color:#284652;transform:scaleX(0.95);">13047,13048,13049</span>
<span class="t" style="left:174.79999999999998px;top:413.72px;font-size:5.4px;color:#284652;transform:scaleX(0.97);">CVE-2010-1297</span>
<span class="t" style="left:506.1px;top:413.72px;font-size:5.4px;color:#284652;">Category I</span>
<span class="t" style="left:588.5px;top:413.72px;font-size:5.4px;color:#284652;">06/22/2010 6:21 PM</span>
<span class="t" style="left:671.3000000000001px;top:413.72px;font-size:5.4px;color:#284652;">08/28/2010 1:41 PM</span>
<span class="t" style="left:797.5px;width:21px;text-align:center;top:413.72px;font-size:5.4px;color:#284652;">3</span>
<span class="t" style="left:825.9px;width:10px;text-align:center;top:415.48px;font-size:6.8px;font-weight:bold;color:#4a4a4a;font-family:'Liberation Serif',serif;">i</span>
<svg class="abs" style="left:851.5px;top:415.86px" width="7" height="6" viewBox="0 0 7 6"><polygon points="0.3,2.1 3,2.1 3,0.5 6,3 3,5.5 3,3.9 0.3,3.9" fill="#1c1c1c"/></svg>
<svg class="abs" style="left:740px;top:362px" width="80" height="66" viewBox="740 362 80 66">
<path d="M746,380.2 C748,375.6 753.5,370.2 762.2,368.8 C768.5,368.6 774.5,372.5 776.8,380 L770.4,380 C769.3,376.5 766.5,372.6 761.5,372.1 C756,372 751.5,375.3 747.3,380.6 Z" fill="#1414ff"/>
</svg>
<span class="t" style="left:764.5px;top:365px;font-size:67.7px;line-height:1;font-family:'Liberation Serif',serif;font-style:italic;color:#1414ff;transform:matrix(1,0,-0.1175,1,0,0);transform-origin:0 0;clip-path:polygon(0 14.6px,27px 14.6px,27px 0,75px 0,75px 67.7px,0 67.7px);">V</span>
<span class="t" style="left:748.3px;top:375.3px;font-size:20px;line-height:1.4;font-weight:700;font-family:'Liberation Serif','Noto Serif CJK SC',serif;color:#f21414;transform:scale(1.03,0.9);transform-origin:0 50%;">运</span>
<span class="t" style="left:778.4px;top:375.3px;font-size:20px;line-height:1.4;font-weight:700;font-family:'Liberation Serif','Noto Serif CJK SC',serif;color:#f21414;transform:scale(1.0,0.9);transform-origin:0 50%;">维</span>
<span class="t" style="left:807.6px;top:375.3px;font-size:20px;line-height:1.4;font-weight:700;font-family:'Liberation Serif','Noto Serif CJK SC',serif;color:#f21414;transform:scale(0.95,0.9);transform-origin:0 50%;">网</span>
<span class="t" style="left:743.2px;top:405.6px;font-size:18px;line-height:1.2;letter-spacing:1px;font-family:'Liberation Serif',serif;color:#f21414;transform:scaleX(0.93);transform-origin:0 50%;">Yun</span>
<span class="t" style="left:791.2px;top:405.6px;font-size:18px;line-height:1.2;letter-spacing:0.75px;font-family:'Liberation Serif',serif;color:#f21414;">Network</span>
</div></body></html>
